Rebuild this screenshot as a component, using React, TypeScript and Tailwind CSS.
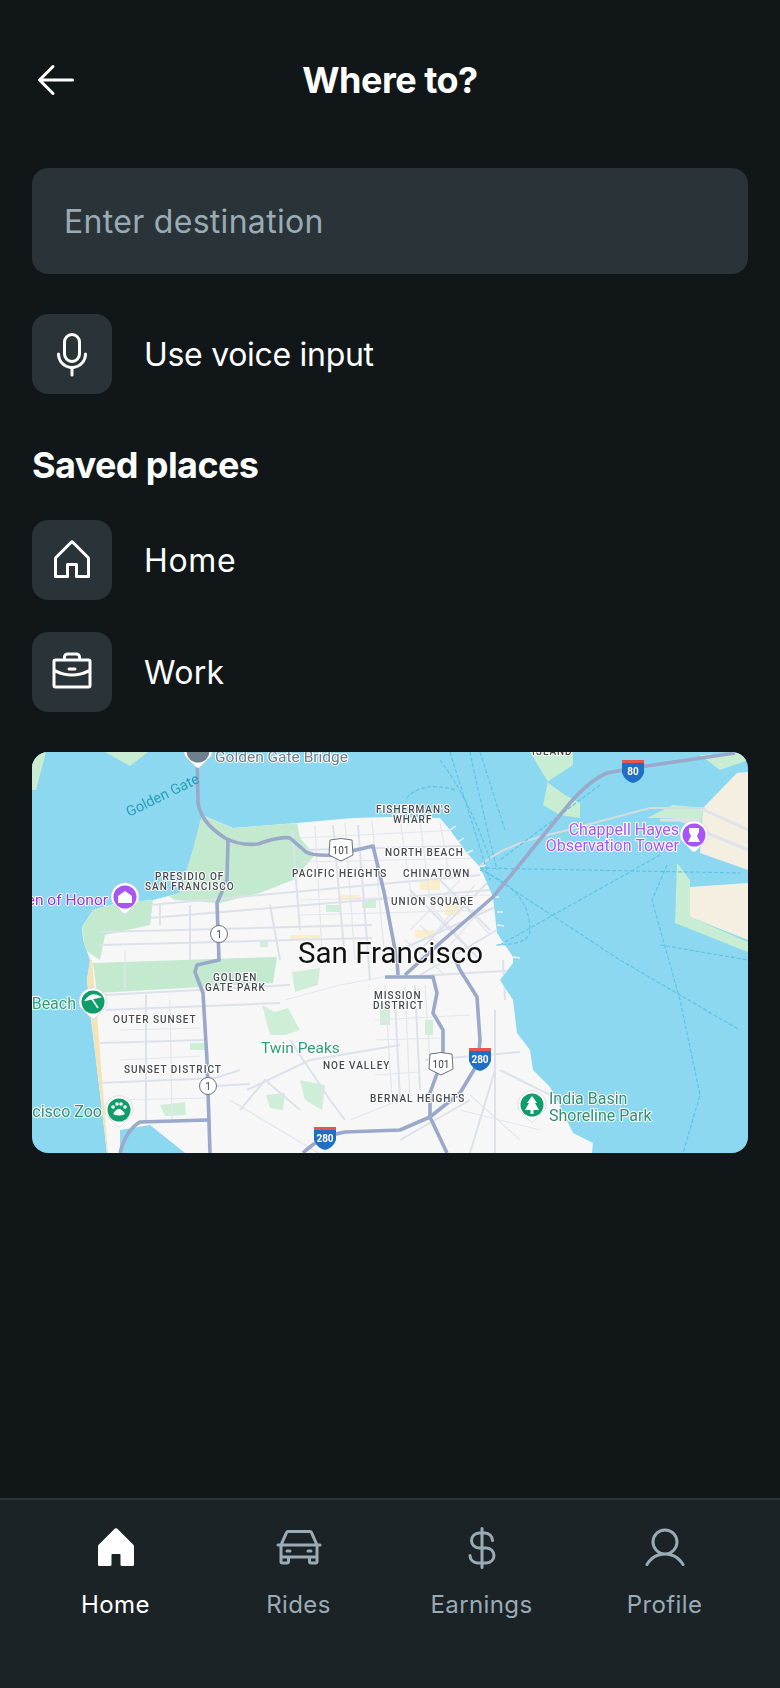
import { PiArrowLeft, PiBriefcase, PiCar, PiCurrencyDollar, PiHouse, PiHouseFill, PiMicrophone, PiUser } from "react-icons/pi"

const font = { fontFamily: "Inter, 'Noto Sans', sans-serif" }

const navItems = [
  { label: "Home", icon: PiHouseFill, active: true },
  { label: "Rides", icon: PiCar, active: false },
  { label: "Earnings", icon: PiCurrencyDollar, active: false },
  { label: "Profile", icon: PiUser, active: false },
]

// district labels: x, baseline y, text
const districts: [number, number, string][] = [
  [155, 880, "PRESIDIO OF"],
  [145, 890, "SAN FRANCISCO"],
  [292, 877, "PACIFIC HEIGHTS"],
  [376, 813, "FISHERMAN'S"],
  [393, 823, "WHARF"],
  [385, 856, "NORTH BEACH"],
  [403, 877, "CHINATOWN"],
  [391, 905, "UNION SQUARE"],
  [213, 981, "GOLDEN"],
  [205, 991, "GATE PARK"],
  [113, 1023, "OUTER SUNSET"],
  [124, 1073, "SUNSET DISTRICT"],
  [323, 1069, "NOE VALLEY"],
  [370, 1102, "BERNAL HEIGHTS"],
  [374, 999, "MISSION"],
  [373, 1009, "DISTRICT"],
  [532, 755, "ISLAND"],
]

const highways = [
  "M197 752 L198 802 Q200 822 225 838 Q240 846 258 844 Q280 836 290 838 L306 852 Q312 856 335 855 L373 846 L384 892 L397 960 L398 975",
  "M228 840 L227 880 L217 903 L219 960 L197 965 L195 972 L203 993 L207 1060 L210 1153",
  "M120 1153 Q126 1130 140 1122 L208 1120",
  "M303 1153 Q320 1136 345 1132 L400 1130 L430 1117 L460 1093 L478 1063 L480 1040 L477 997 L460 970 L452 952",
  "M385 977 L433 977 L437 993 L433 1013 L443 1030 L443 1057 L430 1093 L430 1117 L447 1153",
  "M405 975 L440 943 L493 897 L570 803 Q590 780 607 773 L633 768 L735 753",
]

const roads = [
  "M100 932 L372 925", "M100 945 L372 938", "M105 995 L290 985", "M105 1010 L280 1003", "M100 1043 L205 1040",
  "M100 1083 L215 1078 L240 1070", "M215 1086 L250 1084", "M150 905 L480 875", "M150 918 L490 890", "M300 850 L500 845",
  "M292 830 L300 930", "M333 825 L345 960", "M358 825 L370 980", "M160 905 L160 925", "M190 905 L190 960",
  "M146 995 L146 1120", "M270 905 L280 960", "M247 1090 L310 1060 L370 1050 L400 1045", "M290 1040 L330 1100 L345 1120",
  "M240 1110 L265 1080 L300 1110", "M395 1000 L400 1100", "M415 985 L420 1090", "M503 960 L505 1000", "M495 1010 L495 1153",
  "M400 977 L520 970", "M425 1060 L520 1052", "M500 1070 L560 1100", "M470 1153 L495 1070", "M400 1140 L470 1100",
  "M400 950 L500 905", "M410 960 L490 880", "M420 975 L497 930", "M440 880 L490 930", "M410 890 L480 960",
]

// denser blocks downtown and in the mission
const thinRoads = [
  "M300 838 L460 830", "M300 862 L480 858", "M300 900 L490 895", "M300 915 L490 910", "M315 826 L322 950", "M345 822 L355 960",
  "M372 820 L385 960", "M400 820 L412 900", "M420 820 L430 900", "M440 822 L450 880", "M430 905 L470 950", "M450 890 L490 935",
  "M420 925 L460 965", "M405 940 L445 975", "M460 880 L410 930", "M475 885 L425 945", "M485 905 L450 945",
  "M385 985 L392 1100", "M405 985 L410 1100", "M425 985 L430 1060", "M375 1020 L470 1015", "M375 1040 L440 1038", "M375 1075 L420 1072",
  "M125 950 L125 990", "M170 1000 L172 1120", "M120 1030 L200 1028", "M120 1060 L200 1056", "M120 1100 L205 1098",
  "M285 1000 L340 985 L395 975", "M230 1100 L330 1160", "M350 1120 L400 1100", "M460 1110 L540 1130", "M470 1095 L520 1140",
]

const ferries = [
  "M450 752 L490 880", "M470 752 Q480 800 497 870", "M480 752 L505 830", "M480 868 L740 873",
  "M480 868 L620 960 L740 1030", "M480 870 Q530 890 530 930 Q530 945 495 945", "M500 945 L660 855",
  "M455 790 Q420 780 405 800", "M440 760 Q470 800 490 860", "M600 785 L500 860",
  "M667 865 L652 900 L680 1000 L700 1095 L683 1153", "M660 945 L748 960",
]

function Shield({ x, y, label }: { x: number; y: number; label: string }) {
  return (
    <g>
      <path d={`M${x - 11} ${y - 10} Q${x} ${y - 13} ${x + 11} ${y - 10} L${x + 12} ${y + 5} Q${x + 6} ${y + 8} ${x} ${y + 11} Q${x - 6} ${y + 8} ${x - 12} ${y + 5} Z`} fill="#fff" stroke="#6b7280" strokeWidth="1" />
      <text x={x} y={y + 4} textAnchor="middle" fontSize="10" fill="#3c4043" style={{ fontFamily: "Roboto, sans-serif" }}>{label}</text>
    </g>
  )
}

function Interstate({ x, y, label }: { x: number; y: number; label: string }) {
  return (
    <g>
      <path d={`M${x - 11} ${y - 9} H${x + 11} V${y + 3} Q${x + 8} ${y + 11} ${x} ${y + 13} Q${x - 8} ${y + 11} ${x - 11} ${y + 3} Z`} fill="#1f6fc4" />
      <rect x={x - 11} y={y - 10} width="22" height="3" fill="#e8554e" />
      <text x={x} y={y + 5} textAnchor="middle" fontSize="10" fontWeight="700" fill="#fff" style={{ fontFamily: "Roboto, sans-serif" }}>{label}</text>
    </g>
  )
}

function Pin({ x, y, color, children }: { x: number; y: number; color: string; children?: React.ReactNode }) {
  return (
    <g>
      <path d={`M${x - 13} ${y + 5} A14 14 0 1 1 ${x + 13} ${y + 5} L${x + 2} ${y + 16} Q${x} ${y + 18} ${x - 2} ${y + 16} Z`} fill="#fff" stroke="#c7ccd1" strokeWidth="0.6" />
      <circle cx={x} cy={y} r="11.5" fill={color} />
      {children}
    </g>
  )
}

function MapView() {
  return (
    <div className="mt-10 h-[401px] overflow-hidden rounded-2xl bg-[#8bd8f0]">
      <svg viewBox="32 752 716 401" className="block h-full w-full blur-[0.5px]">
        <defs>
          <clipPath id="land">
            <path d="M202 815 L233 828 L297 823 L353 818 L387 817 L440 818 L450 830 L467 853 L480 867 L493 897 L497 933 L513 957 L513 963 L500 980 L513 1000 L517 1033 L530 1050 L533 1070 L550 1087 L557 1100 L573 1133 L593 1143 L592 1153 L107 1153 L100 1093 L92 1027 L87 980 L90 960 L83 940 L82 927 L93 910 L117 903 L153 900 L180 893 L193 850 Z" />
          </clipPath>
        </defs>

        {/* east bay and islands */}
        <path d="M737 773 L748 772 V870 L700 853 L703 808 Z" fill="#f5efe2" />
        <path d="M690 887 L748 883 V940 L690 917 Z" fill="#f5efe2" />
        <path d="M677 863 L690 880 L690 917 L748 942 V952 L730 945 L675 923 Z" fill="#c9edd3" />
        <path d="M647 818 L673 805 L703 808 L700 830 L672 818 Z" fill="#c9edd3" />
        <path d="M530 752 H573 V765 L547 782 L565 795 L580 803 L580 818 L560 815 L543 805 L548 782 Z" fill="#c9edd3" />
        <path d="M105 752 H148 L130 766 Z" fill="#c9edd3" />
        <path d="M32 752 H46 L36 790 L32 790 Z" fill="#c9edd3" />
        <path d="M700 755 L748 752 V760 L720 770 Z" fill="#c9edd3" />
        <path d="M660 820 L700 820 M700 808 L748 830 M700 830 L748 850" stroke="#dfe3ea" strokeWidth="3" fill="none" />
        <path d="M478 868 Q500 845 560 832 L650 808 L705 808" stroke="#d5dbe0" strokeWidth="2" fill="none" />

        {/* san francisco */}
        <path d="M202 815 L233 828 L297 823 L353 818 L387 817 L440 818 L450 830 L467 853 L480 867 L493 897 L497 933 L513 957 L513 963 L500 980 L513 1000 L517 1033 L530 1050 L533 1070 L550 1087 L557 1100 L573 1133 L593 1143 L592 1153 L107 1153 L100 1093 L92 1027 L87 980 L90 960 L83 940 L82 927 L93 910 L117 903 L153 900 L180 893 L193 850 Z" fill="#f7f7f8" />
        {/* piers */}
        <path d="M450 830 L456 826 M458 842 L464 838 M467 853 L473 850 M480 867 L486 865 M493 897 L499 897 M497 912 L503 912 M497 925 L504 926 M513 957 L520 958" stroke="#eef1f3" strokeWidth="1.5" />
        <g clipPath="url(#land)">
          <path d="M202 815 L233 828 L297 823 L300 838 L315 855 L293 880 L260 893 L220 903 L175 900 L160 890 L190 850 Z" fill="#c3e9cf" />
          <path d="M82 927 L93 910 L117 903 L153 900 L150 925 L105 935 L100 960 L85 950 Z" fill="#c3e9cf" />
          <path d="M93 963 L277 957 L273 983 L97 993 Z" fill="#c3e9cf" />
          <path d="M82 960 L92 960 L98 1027 L108 1153 L100 1153 L85 1030 Z" fill="#f5e3b8" />
          <path d="M262 1005 L275 1012 L288 1008 L300 1030 L285 1035 L270 1035 Z" fill="#cfeed8" />
          <path d="M292 972 L320 968 L318 985 L295 992 Z" fill="#cfeed8" />
          <path d="M300 1080 L325 1085 L322 1110 L305 1100 Z" fill="#cfeed8" />
          <path d="M266 1095 L285 1093 L283 1110 L270 1108 Z" fill="#cfeed8" />
          <path d="M160 1105 L185 1102 L186 1115 L165 1116 Z" fill="#cfeed8" />
          <path d="M120 1130 L150 1125 L185 1153 H120 Z" fill="#8bd8f0" />
          <path d="M425 1020 H433 V1035 H425 Z M380 1005 H390 V1025 H380 Z M190 1043 H205 V1050 H190 Z" fill="#cfeed8" />
          <path d="M326 905 H340 V912 H326 Z M362 900 H376 V908 H362 Z M260 940 H268 V947 H260 Z" fill="#cfeed8" />
          <path d="M420 880 H440 V890 H420 Z M445 905 H460 V915 H445 Z M340 895 H360 V900 H340 Z M290 935 H320 V940 H290 Z M415 930 H435 V938 H415 Z" fill="#fbeecb" />
          {thinRoads.map((d) => (
            <path key={d} d={d} stroke="#e3e6ec" strokeWidth="1.2" fill="none" />
          ))}
          {roads.map((d) => (
            <path key={d} d={d} stroke="#dde2ea" strokeWidth="2" fill="none" />
          ))}
        </g>

        {ferries.map((d) => (
          <path key={d} d={d} stroke="#5fc4e4" strokeWidth="1.2" strokeDasharray="4 2" fill="none" />
        ))}
        {highways.map((d) => (
          <path key={d} d={d} stroke="#9aa9c9" strokeWidth="3.6" strokeLinejoin="round" fill="none" />
        ))}

        <Shield x={341} y={850} label="101" />
        <Shield x={441} y={1064} label="101" />
        <circle cx={219} cy={934} r="8.5" fill="#fff" stroke="#6b7280" />
        <text x={219} y={938} textAnchor="middle" fontSize="10" fill="#3c4043" style={{ fontFamily: "Roboto, sans-serif" }}>1</text>
        <circle cx={208} cy={1086} r="8.5" fill="#fff" stroke="#6b7280" />
        <text x={208} y={1090} textAnchor="middle" fontSize="10" fill="#3c4043" style={{ fontFamily: "Roboto, sans-serif" }}>1</text>
        <Interstate x={325} y={1137} label="280" />
        <Interstate x={480} y={1058} label="280" />
        <Interstate x={633} y={770} label="80" />

        <g style={{ fontFamily: "Roboto, sans-serif", paintOrder: "stroke" }} stroke="#fff" strokeWidth="2" strokeLinejoin="round">
          {districts.map(([x, y, t]) => (
            <text key={t} x={x} y={y} fontSize="10" fontWeight="500" letterSpacing="1" fill="#45494d">{t}</text>
          ))}
          <text x="298" y="963" fontSize="29.5" fill="#111">San Francisco</text>
          <text x="215" y="762" fontSize="15.5" fill="#6f7f8c">Golden Gate Bridge</text>
          <text transform="translate(129 817) rotate(-26)" fontSize="14.5" fill="#2a9fb8" stroke="none">Golden Gate</text>
          <text x="108" y="905" textAnchor="end" fontSize="15.5" fill="#9333ea">en of Honor</text>
          <text x="679" y="835" textAnchor="end" fontSize="16" fill="#a855f7">Chappell Hayes</text>
          <text x="679" y="851" textAnchor="end" fontSize="16" fill="#a855f7">Observation Tower</text>
          <text x="76" y="1009" textAnchor="end" fontSize="16" fill="#2f9e78">Beach</text>
          <text x="102" y="1117" textAnchor="end" fontSize="16" fill="#2f8f72">cisco Zoo</text>
          <text x="261" y="1053" fontSize="15.5" fill="#2f9e78">Twin Peaks</text>
          <text x="549" y="1104" fontSize="16" fill="#2f8f72">India Basin</text>
          <text x="549" y="1121" fontSize="16" fill="#2f8f72">Shoreline Park</text>
        </g>

        <Pin x={198} y={751} color="#6f7f8c" />
        <Pin x={125} y={897} color="#a855f7">
          <path d="M118 896 L125 891 L132 896 V903 H118 Z" fill="#fff" />
        </Pin>
        <Pin x={694} y={835} color="#a855f7">
          <path d="M689 828 H699 V832 L697 836 L700 842 H688 L691 836 L689 832 Z" fill="#fff" />
        </Pin>
        <Pin x={93} y={1002} color="#0f9d6b">
          <path d="M86 1000 Q92 992 100 997 Z M92 999 L98 1008" stroke="#fff" strokeWidth="1.6" fill="#fff" />
        </Pin>
        <Pin x={119} y={1110} color="#0f9d6b">
          <path d="M113 1114 Q119 1104 125 1114 Q119 1117 113 1114 Z" fill="#fff" />
          <circle cx={113} cy={1107} r="1.8" fill="#fff" />
          <circle cx={117} cy={1104} r="1.8" fill="#fff" />
          <circle cx={121} cy={1104} r="1.8" fill="#fff" />
          <circle cx={125} cy={1107} r="1.8" fill="#fff" />
        </Pin>
        <Pin x={532} y={1105} color="#0f9d6b">
          <path d="M532 1096 L537 1103 H535 L539 1110 H533.5 V1114 H530.5 V1110 H525 L529 1103 H527 Z" fill="#fff" />
        </Pin>
      </svg>
    </div>
  )
}

export default function App() {
  return (
    <div className="flex min-h-[1688px] flex-col bg-[#111719] text-white" style={font}>
      <div className="px-8">
        {/* Header */}
        <div className="relative flex h-[160px] items-center justify-center">
          <PiArrowLeft className="absolute left-0 text-[48px] text-white" />
          <h1 className="text-[36px] font-bold tracking-[-0.5px]">Where to?</h1>
        </div>

        <div className="mt-2 flex h-[106px] items-center rounded-2xl bg-[#293338] px-8 pt-0.5 text-[32px] tracking-[0.3px] text-[#9aabb5]">
          Enter destination
        </div>

        <div className="mt-10 flex items-center gap-8">
          <div className="flex h-20 w-20 items-center justify-center rounded-2xl bg-[#293338]">
            <PiMicrophone className="text-[48px] text-white" />
          </div>
          <span className="pt-0.5 text-[32px] tracking-[-0.3px]">Use voice input</span>
        </div>

        <h2 className="mt-[41px] text-[36px] leading-[60px] font-bold tracking-[-0.6px]">Saved places</h2>

        <div className="mt-[25px] flex items-center gap-8">
          <div className="flex h-20 w-20 items-center justify-center rounded-2xl bg-[#293338]">
            <PiHouse className="text-[48px] text-white" />
          </div>
          <span className="pt-0.5 text-[32px] tracking-[0.7px]">Home</span>
        </div>
        <div className="mt-8 flex items-center gap-8">
          <div className="flex h-20 w-20 items-center justify-center rounded-2xl bg-[#293338]">
            <PiBriefcase className="text-[48px] text-white" />
          </div>
          <span className="pt-0.5 text-[32px] tracking-[0.3px]">Work</span>
        </div>

        <MapView />
      </div>

      {/* Bottom nav */}
      <nav className="mt-auto grid h-[190px] grid-cols-4 border-t-2 border-[#293338] bg-[#1b2327] px-6 pt-6">
        {navItems.map((item) => (
          <div key={item.label} className={`flex flex-col items-center ${item.active ? "text-white" : "text-[#9aabb5]"}`}>
            <item.icon className="text-[48px]" />
            <span className="mt-[13px] text-[24px] leading-[40px] tracking-[0.4px]">{item.label}</span>
          </div>
        ))}
      </nav>
    </div>
  )
}
